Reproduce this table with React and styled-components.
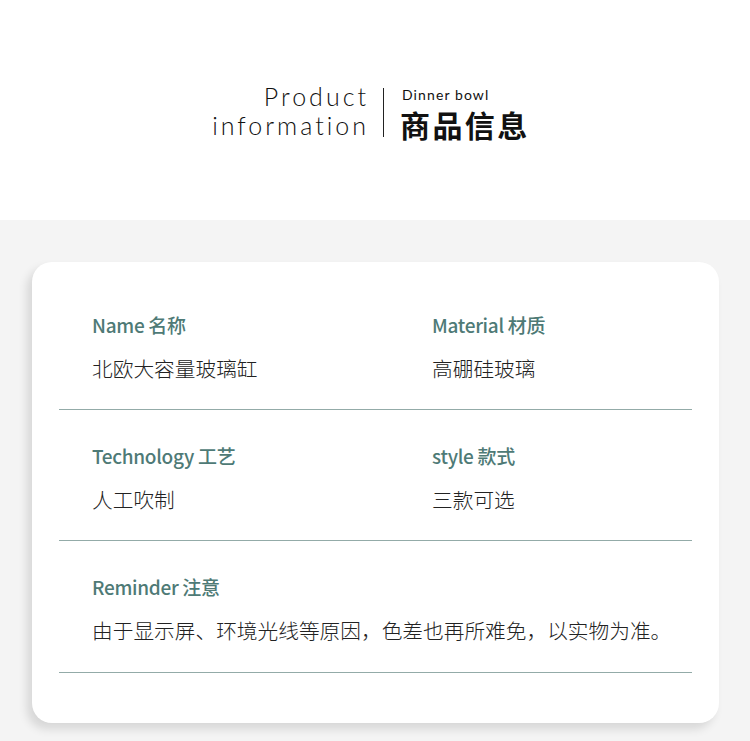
import React from "react";
import styled, { createGlobalStyle } from "styled-components";

const Global = createGlobalStyle`
  html, body { margin: 0; padding: 0; background: #f4f4f4; }
  body { font-family: "Noto Sans CJK SC", "Noto Sans", sans-serif; }
  * { box-sizing: border-box; }
`;

const Page = styled.div`
  width: 750px;
  min-height: 741px;
  background: #f4f4f4;
`;

const Header = styled.header`
  height: 220px;
  background: #ffffff;
  padding-top: 82px;
`;

const HeaderInner = styled.div`
  display: flex;
  align-items: flex-start;
`;

const EnTitle = styled.div`
  width: 369px;
  text-align: right;
  font-family: "Lato", "Liberation Sans", sans-serif;
  font-weight: 300;
  font-size: 25px;
  line-height: 29px;
  letter-spacing: 3px;
  color: #111;
`;

const VLine = styled.div`
  width: 1px;
  height: 49px;
  background: #222;
  margin: 6px 16px 0 14px;
`;

const CnBlock = styled.div`
  display: flex;
  flex-direction: column;
  margin-top: 6px;
`;

const SubTitle = styled.div`
  font-family: "Lato", "Liberation Sans", sans-serif;
  font-weight: 400;
  font-size: 14px;
  line-height: 14px;
  letter-spacing: 1.1px;
  padding-left: 2px;
  color: #111;
`;

const CnTitle = styled.div`
  font-family: "Noto Sans CJK SC", sans-serif;
  font-weight: 700;
  font-size: 30px;
  line-height: 44px;
  letter-spacing: 2.4px;
  color: #111;
`;

const Body = styled.main`
  padding: 42px 31px 18px 32px;
`;

const Card = styled.section`
  background: #ffffff;
  border-radius: 20px;
  box-shadow: -5px 6px 10px rgba(0, 0, 0, 0.12);
  padding: 17px 27px 50px;
`;

const Row = styled.div`
  display: grid;
  grid-template-columns: ${(p) => (p.$single ? "1fr" : "340px 1fr")};
  padding: 33px 0 ${(p) => (p.$single ? 28 : 27)}px 33px;
  border-bottom: 1px solid #93aba8;
`;

const Field = styled.div`
  display: flex;
  flex-direction: column;
  gap: 16px;
`;

const Label = styled.div`
  font-size: 19px;
  line-height: 26px;
  font-weight: 500;
  color: #4e7a76;
  letter-spacing: -0.3px;
`;

const Value = styled.div`
  font-size: 20.7px;
  line-height: 28px;
  font-weight: 300;
  color: #222;
`;

const rows = [
  [
    { label: "Name 名称", value: "北欧大容量玻璃缸" },
    { label: "Material 材质", value: "高硼硅玻璃" },
  ],
  [
    { label: "Technology 工艺", value: "人工吹制" },
    { label: "style 款式", value: "三款可选" },
  ],
  [{ label: "Reminder 注意", value: "由于显示屏、环境光线等原因，色差也再所难免，以实物为准。" }],
];

export default function App() {
  return (
    <Page>
      <Global />
      <Header>
        <HeaderInner>
          <EnTitle>
            Product
            <br />
            information
          </EnTitle>
          <VLine />
          <CnBlock>
            <SubTitle>Dinner bowl</SubTitle>
            <CnTitle>商品信息</CnTitle>
          </CnBlock>
        </HeaderInner>
      </Header>
      <Body>
        <Card>
          {rows.map((r, i) => (
            <Row key={i} $single={r.length === 1}>
              {r.map((f) => (
                <Field key={f.label}>
                  <Label>{f.label}</Label>
                  <Value>{f.value}</Value>
                </Field>
              ))}
            </Row>
          ))}
        </Card>
      </Body>
    </Page>
  );
}
